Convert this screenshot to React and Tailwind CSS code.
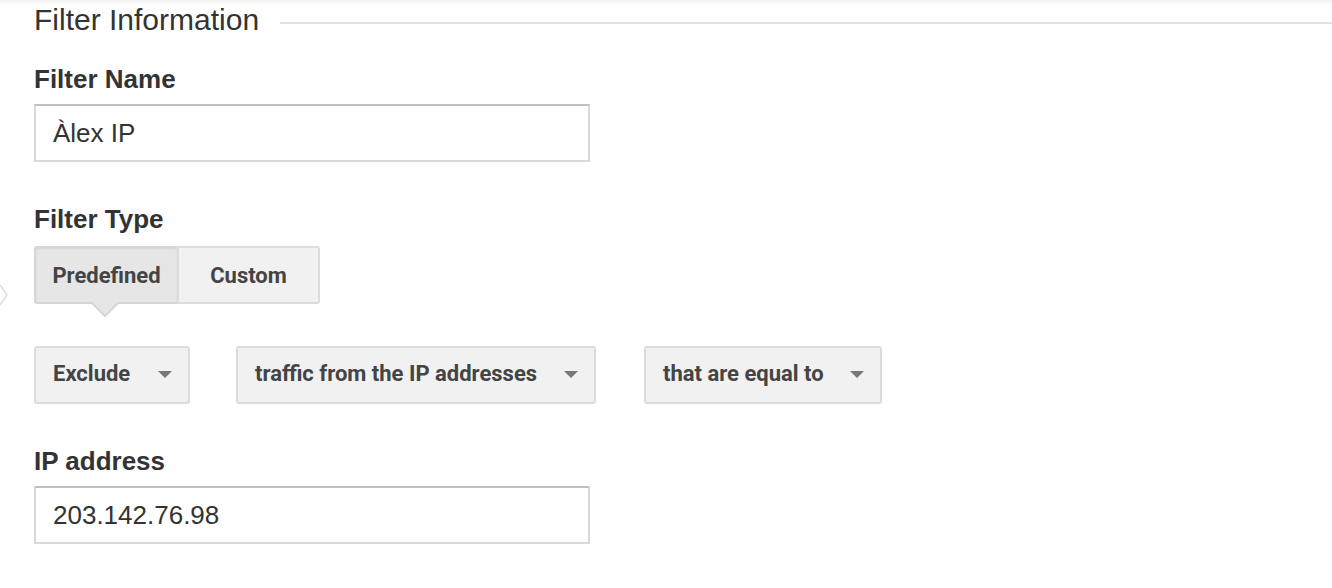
const arial = { fontFamily: '"Liberation Sans", Arial, sans-serif' };

function Caret() {
  return (
    <svg width="14" height="8" viewBox="0 0 14 8" aria-hidden>
      <path d="M0 0h14L7 7z" fill="#777" />
    </svg>
  );
}

function Select({ label, width }) {
  return (
    <div
      className={`flex h-[58px] items-center justify-between rounded-[3px] border-2 border-[#dcdcdc] bg-[#f1f1f1] pl-[17px] pr-[16px] font-['Roboto',sans-serif] text-[22px] font-bold text-[#444] ${width}`}
    >
      <span className="-mt-[4px]">{label}</span>
      <Caret />
    </div>
  );
}

function TextField({ value }) {
  return (
    <div className="flex h-[58px] w-[556px] items-center border-2 border-[#d9d9d9] border-t-[#c0c0c0] bg-white pl-[17px] text-[26px] text-[#333]">
      {value}
    </div>
  );
}

export default function App() {
  return (
    <div className="relative h-[588px] w-[1332px] overflow-hidden bg-white" style={arial}>
      <div className="h-[6px] bg-gradient-to-b from-[#f2f2f2] to-white" />
      <div className="pl-[34px]">
        <div className="flex items-center">
          <h2 className="-mt-[2px] text-[30px] leading-[32px] text-[#333]">Filter Information</h2>
          <div className="ml-[21px] mt-[3px] h-[2px] flex-1 bg-[#e2e2e2]" />
        </div>

        <div className="mt-[29px] text-[26px] font-bold leading-[28px] text-[#333]">Filter Name</div>
        <div className="mt-[11px]">
          <TextField value="Àlex IP" />
        </div>

        <div className="mt-[43px] text-[26px] font-bold leading-[28px] text-[#333]">Filter Type</div>
        <div className="relative mt-[13px] flex w-[286px]">
          <div className="flex h-[58px] w-[143px] items-center justify-center rounded-l-[3px] border-2 border-r-0 border-[#d6d6d6] bg-[#e6e6e6] font-['Roboto',sans-serif] text-[22px] font-bold text-[#444] shadow-[inset_0_1px_2px_rgba(0,0,0,0.08)]">
            Predefined
          </div>
          <div className="flex h-[58px] w-[143px] items-center justify-center rounded-r-[3px] border-2 border-[#dcdcdc] bg-[#f1f1f1] font-['Roboto',sans-serif] text-[22px] font-bold text-[#444]">
            Custom
          </div>
          <svg className="absolute left-[56px] top-[56px]" width="30" height="16" viewBox="0 0 30 16" aria-hidden>
            <path d="M1 0 L15 14 L29 0" fill="#e6e6e6" stroke="#d6d6d6" strokeWidth="2" />
          </svg>
        </div>

        <div className="mt-[42px] flex">
          <Select label="Exclude" width="w-[156px]" />
          <div className="ml-[46px]">
            <Select label="traffic from the IP addresses" width="w-[360px]" />
          </div>
          <div className="ml-[48px]">
            <Select label="that are equal to" width="w-[238px]" />
          </div>
        </div>

        <div className="mt-[43px] text-[26px] font-bold leading-[28px] text-[#333]">IP address</div>
        <div className="mt-[11px]">
          <TextField value="203.142.76.98" />
        </div>
      </div>

      <svg className="absolute left-0 top-[283px]" width="8" height="24" viewBox="0 0 8 24" aria-hidden>
        <path d="M0 2 L7 12 L0 22" fill="none" stroke="#dddddd" strokeWidth="1.5" />
      </svg>
    </div>
  );
}
